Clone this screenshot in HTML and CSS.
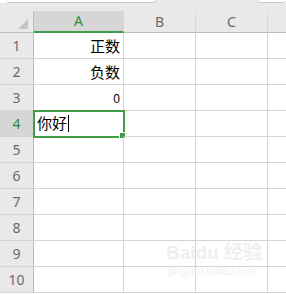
FILE: index.html
```html
<html>
<head>
    <link rel="stylesheet" href="styles.css">
</head>
<body>
    <div class="topbar">
        <div class="tabLeft"></div>
        <div class="tabMid"></div>
        <div class="tabRight"></div>
    </div>
    <div class="toolgap"></div>

    <div class="sheet">
        <div class="corner"><span class="tri"></span></div>
        <div class="colHead active">A</div>
        <div class="colHead">B</div>
        <div class="colHead">C</div>
        <div class="colHead last"></div>

        <div class="rowHead">1</div>
        <div class="cell right">正数</div>
        <div class="cell"></div><div class="cell"></div><div class="cell last"></div>

        <div class="rowHead">2</div>
        <div class="cell right">负数</div>
        <div class="cell"></div><div class="cell"></div><div class="cell last"></div>

        <div class="rowHead">3</div>
        <div class="cell right num">0</div>
        <div class="cell"></div><div class="cell"></div><div class="cell last"></div>

        <div class="rowHead active">4</div>
        <div class="cell selected">你好<span class="caret"></span><span class="handle"></span></div>
        <div class="cell"></div><div class="cell"></div><div class="cell last"></div>

        <div class="rowHead">5</div>
        <div class="cell"></div><div class="cell"></div><div class="cell"></div><div class="cell last"></div>
        <div class="rowHead">6</div>
        <div class="cell"></div><div class="cell"></div><div class="cell"></div><div class="cell last"></div>
        <div class="rowHead">7</div>
        <div class="cell"></div><div class="cell"></div><div class="cell"></div><div class="cell last"></div>
        <div class="rowHead">8</div>
        <div class="cell"></div><div class="cell"></div><div class="cell"></div><div class="cell last"></div>
        <div class="rowHead">9</div>
        <div class="cell"></div><div class="cell"></div><div class="cell"></div><div class="cell last"></div>
        <div class="rowHead">10</div>
        <div class="cell"></div><div class="cell"></div><div class="cell"></div><div class="cell last"></div>
    </div>

    <div class="watermark">
        <div class="wmLogo">Bai<span class="paw">du</span> 经验</div>
        <div class="wmUrl">jingyan.baidu.com</div>
    </div>
</body>
</html>
```

FILE: styles.css
```css
body {
    margin: 0;
    background-color: #ffffff;
    overflow: hidden;
    font-family: "Noto Sans", "Liberation Sans", sans-serif;
}
.topbar {
    display: flex;
    height: 3px;
}
.tabLeft {
    width: 148px;
    border-bottom: 1px solid #c8c8c8;
    border-bottom-left-radius: 6px;
    margin-left: 6px;
    box-sizing: border-box;
}
.tabMid {
    width: 104px;
    background-color: #e9e9e9;
    border-left: 1px solid #c8c8c8;
    border-right: 1px solid #c8c8c8;
    border-top-left-radius: 3px;
    border-top-right-radius: 3px;
}
.tabRight {
    flex: 1;
    border-bottom: 1px solid #c8c8c8;
    border-bottom-right-radius: 6px;
    box-sizing: border-box;
}
.toolgap {
    height: 8px;
    background-color: #e9e9e9;
}
.sheet {
    display: grid;
    grid-template-columns: 34px 90px 72px 72px 1fr;
    grid-template-rows: 22px repeat(10, 26px);
}
.corner {
    background-color: #e9e9e9;
    border-right: 1px solid #bcbcbc;
    border-bottom: 1px solid #bcbcbc;
    display: flex;
    align-items: flex-end;
    justify-content: flex-end;
    padding: 0 5px 3px 0;
}
.tri {
    width: 0;
    height: 0;
    border-left: 10px solid transparent;
    border-bottom: 10px solid #c6c6c6;
}
.colHead {
    background-color: #e9e9e9;
    border-right: 1px solid #d9d9d9;
    border-bottom: 1px solid #bcbcbc;
    color: #6a6a6a;
    font-size: 14px;
    line-height: 21px;
    text-align: center;
}
.colHead.active {
    background-color: #d6d6d6;
    color: #2e8b3a;
    border-bottom: 2px solid #3f9e46;
    line-height: 20px;
}
.colHead.last {
    border-right: none;
}
.rowHead {
    background-color: #e9e9e9;
    border-right: 1px solid #bcbcbc;
    border-bottom: 1px solid #d4d4d4;
    color: #6a6a6a;
    font-size: 14px;
    line-height: 25px;
    text-align: center;
}
.rowHead.active {
    background-color: #d6d6d6;
    color: #2e8b3a;
}
.cell {
    border-right: 1px solid #d4d4d4;
    border-bottom: 1px solid #d4d4d4;
    font-family: "Noto Sans CJK SC", sans-serif;
    font-size: 15px;
    line-height: 25px;
    color: #000000;
    padding: 0 3px;
    position: relative;
}
.cell.last {
    border-right: none;
}
.right {
    text-align: right;
}
.num {
    font-family: "Liberation Sans", sans-serif;
    font-size: 12px;
    line-height: 29px;
}
.selected {
    outline: 2px solid #3f9e46;
    outline-offset: -1px;
    line-height: 24px;
}
.caret {
    display: inline-block;
    width: 1px;
    height: 17px;
    background-color: #000000;
    vertical-align: -3px;
    margin-left: 1px;
}
.handle {
    position: absolute;
    right: -3px;
    bottom: -3px;
    width: 5px;
    height: 5px;
    background-color: #3f9e46;
    border: 1px solid #ffffff;
}
.watermark {
    position: absolute;
    left: 166px;
    top: 242px;
    color: #efefef;
    text-align: center;
    width: 94px;
}
.wmLogo {
    font-family: "Liberation Sans", "Noto Sans CJK SC", sans-serif;
    font-size: 19px;
    font-weight: bold;
    line-height: 22px;
    white-space: nowrap;
}
.wmUrl {
    font-family: "Liberation Sans", sans-serif;
    font-size: 11px;
    line-height: 14px;
}
```
